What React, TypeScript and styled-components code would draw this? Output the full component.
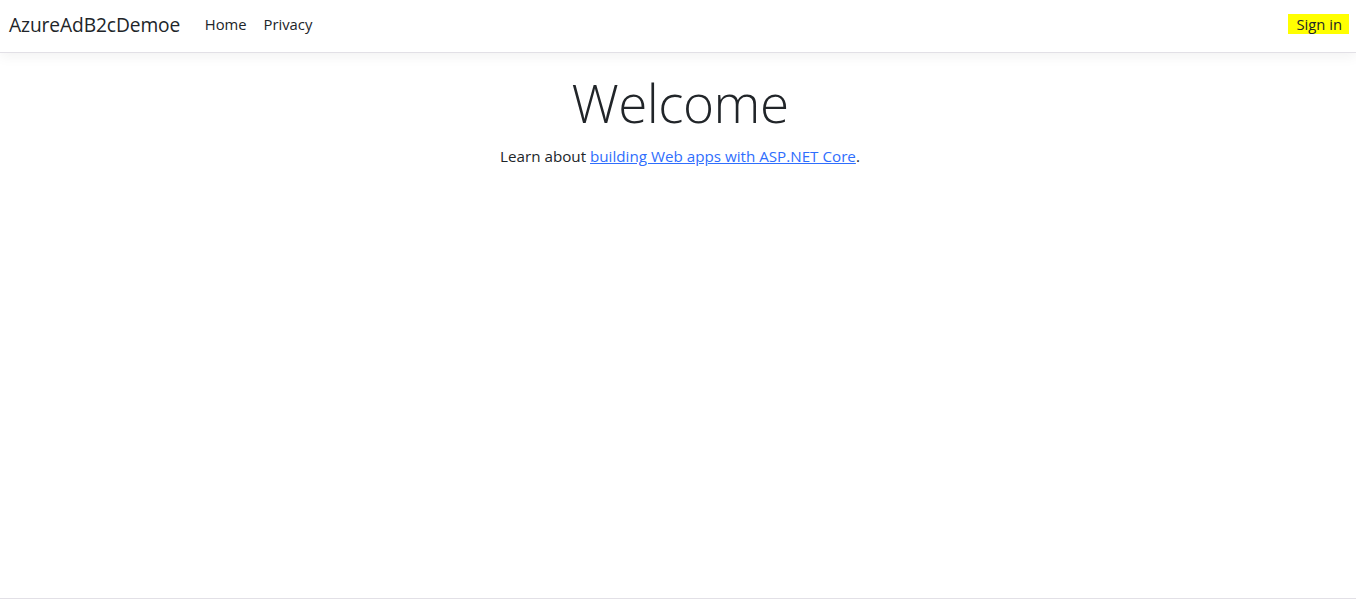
import React from "react";
import styled, { createGlobalStyle } from "styled-components";

const Global = createGlobalStyle`
  html, body { margin: 0; padding: 0; background: #fff; }
  body {
    font-family: "Open Sans", "Noto Sans", sans-serif;
    color: #212529;
    font-size: 15px;
  }
  * { box-sizing: border-box; }
`;

const Page = styled.div`
  min-height: 100vh;
  display: flex;
  flex-direction: column;
`;

const NavBar = styled.header`
  height: 53px;
  display: flex;
  align-items: center;
  padding: 0 7px 4px 9px;
  background: #fff;
  border-bottom: 1px solid #e2e0e6;
  box-shadow: 0 4px 12px rgba(0, 0, 0, 0.05);
  position: relative;
  z-index: 1;
`;

const Brand = styled.a`
  font-size: 19.2px;
  color: #212529;
  text-decoration: none;
  margin-right: 16px;
  letter-spacing: -0.1px;
`;

const NavList = styled.nav`
  display: flex;
  flex: 1;
`;

const NavLink = styled.a`
  color: #212529;
  text-decoration: none;
  font-size: 14.8px;
  padding: 8px 8.5px;
`;

const SignIn = styled.a<{ $highlight?: boolean }>`
  color: #212529;
  text-decoration: none;
  font-size: 14.8px;
  line-height: 20px;
  padding: 0 7px 0 8px;
  background: ${(p) => (p.$highlight ? "#ffff00" : "transparent")};
`;

const Main = styled.main`
  flex: 1;
  padding: 16px 0 0 4px;
  text-align: center;
`;

const Title = styled.h1`
  margin: 0 0 8px;
  font-size: 53px;
  font-weight: 300;
  line-height: 67px;
  color: #212529;
  letter-spacing: -0.5px;
`;

const Lead = styled.p`
  margin: 0;
  font-size: 15.2px;
  line-height: 24px;
`;

const Link = styled.a`
  color: #2f6efd;
  text-decoration: underline;
`;

const Footer = styled.footer`
  height: 9px;
  border-top: 1px solid #e2e0e6;
`;

export default function App() {
  return (
    <>
      <Global />
      <Page>
        <NavBar>
          <Brand href="#">AzureAdB2cDemoe</Brand>
          <NavList>
            <NavLink href="#">Home</NavLink>
            <NavLink href="#">Privacy</NavLink>
          </NavList>
          <SignIn href="#" $highlight>Sign in</SignIn>
        </NavBar>
        <Main>
          <Title>Welcome</Title>
          <Lead>
            Learn about <Link href="#">building Web apps with ASP.NET Core</Link>.
          </Lead>
        </Main>
        <Footer />
      </Page>
    </>
  );
}
